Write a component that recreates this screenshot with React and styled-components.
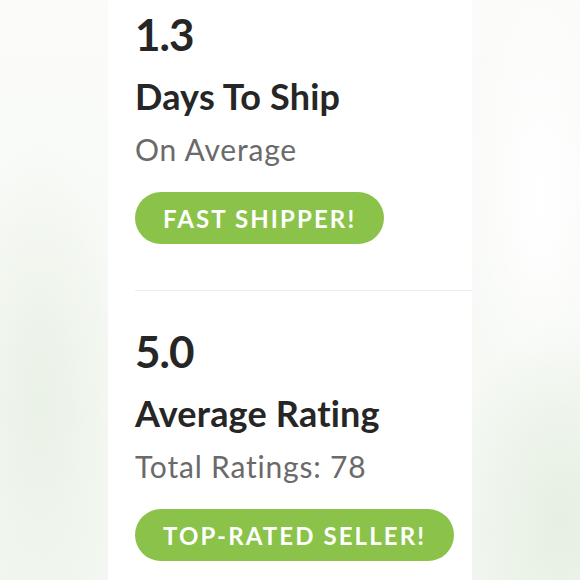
import React from 'react';
import styled, { createGlobalStyle } from 'styled-components';

const GlobalStyle = createGlobalStyle`
  html, body {
    margin: 0;
    padding: 0;
    height: 100%;
  }
  body {
    font-family: Lato, "Liberation Sans", sans-serif;
    background-color: #f7f9f6;
    background-image:
      radial-gradient(ellipse 90px 260px at 40px 400px, #eaf1e6 0%, rgba(234, 241, 230, 0) 100%),
      radial-gradient(ellipse 110px 200px at 560px 520px, #e6efe2 0%, rgba(230, 239, 226, 0) 100%),
      radial-gradient(ellipse 80px 220px at 540px 200px, #ffffff 0%, rgba(255, 255, 255, 0) 100%),
      linear-gradient(180deg, #fbfcfa 0%, #f3f7f1 100%);
    overflow: hidden;
  }
`;

const stats = [
  { value: '1.3', label: 'Days To Ship', sub: 'On Average', badge: 'FAST SHIPPER!' },
  { value: '5.0', label: 'Average Rating', sub: 'Total Ratings: 78', badge: 'TOP-RATED SELLER!' },
];

const App = () => {
  return (
    <>
      <GlobalStyle />
      <Page>
        <Card>
          {stats.map((s, i) => (
            <Section key={s.value} $first={i === 0}>
              <Value>{s.value}</Value>
              <Label>{s.label}</Label>
              <Sub>{s.sub}</Sub>
              <Badge>{s.badge}</Badge>
            </Section>
          ))}
        </Card>
      </Page>
    </>
  );
};

export default App;

const Page = styled.div`
  width: 580px;
  height: 580px;
  display: flex;
  justify-content: center;
`;

const Card = styled.div`
  width: 364px;
  height: 580px;
  background: #ffffff;
  padding-left: 27px;
  box-sizing: border-box;
  display: flex;
  flex-direction: column;
`;

const Section = styled.section`
  display: flex;
  flex-direction: column;
  align-items: flex-start;
  padding-top: ${({ $first }) => ($first ? '12px' : '38px')};
  padding-bottom: 46px;
  border-top: ${({ $first }) => ($first ? 'none' : '1px solid #ececec')};
`;

const Value = styled.div`
  font-size: 44px;
  line-height: 1;
  font-weight: 700;
  color: #262626;
  letter-spacing: -1px;
`;

const Label = styled.div`
  margin-top: 22px;
  font-size: 36px;
  line-height: 1;
  font-weight: 700;
  color: #262626;
  letter-spacing: 0.2px;
`;

const Sub = styled.div`
  margin-top: 20px;
  font-size: 30px;
  line-height: 1;
  font-weight: 400;
  color: #6a6a6a;
  letter-spacing: 0.8px;
`;

const Badge = styled.div`
  margin-top: 28px;
  height: 52px;
  padding: 0 28px;
  border-radius: 26px;
  background: #8bc34a;
  color: #ffffff;
  font-size: 24px;
  font-weight: 700;
  letter-spacing: 2.1px;
  display: flex;
  align-items: center;
  box-sizing: border-box;
`;
